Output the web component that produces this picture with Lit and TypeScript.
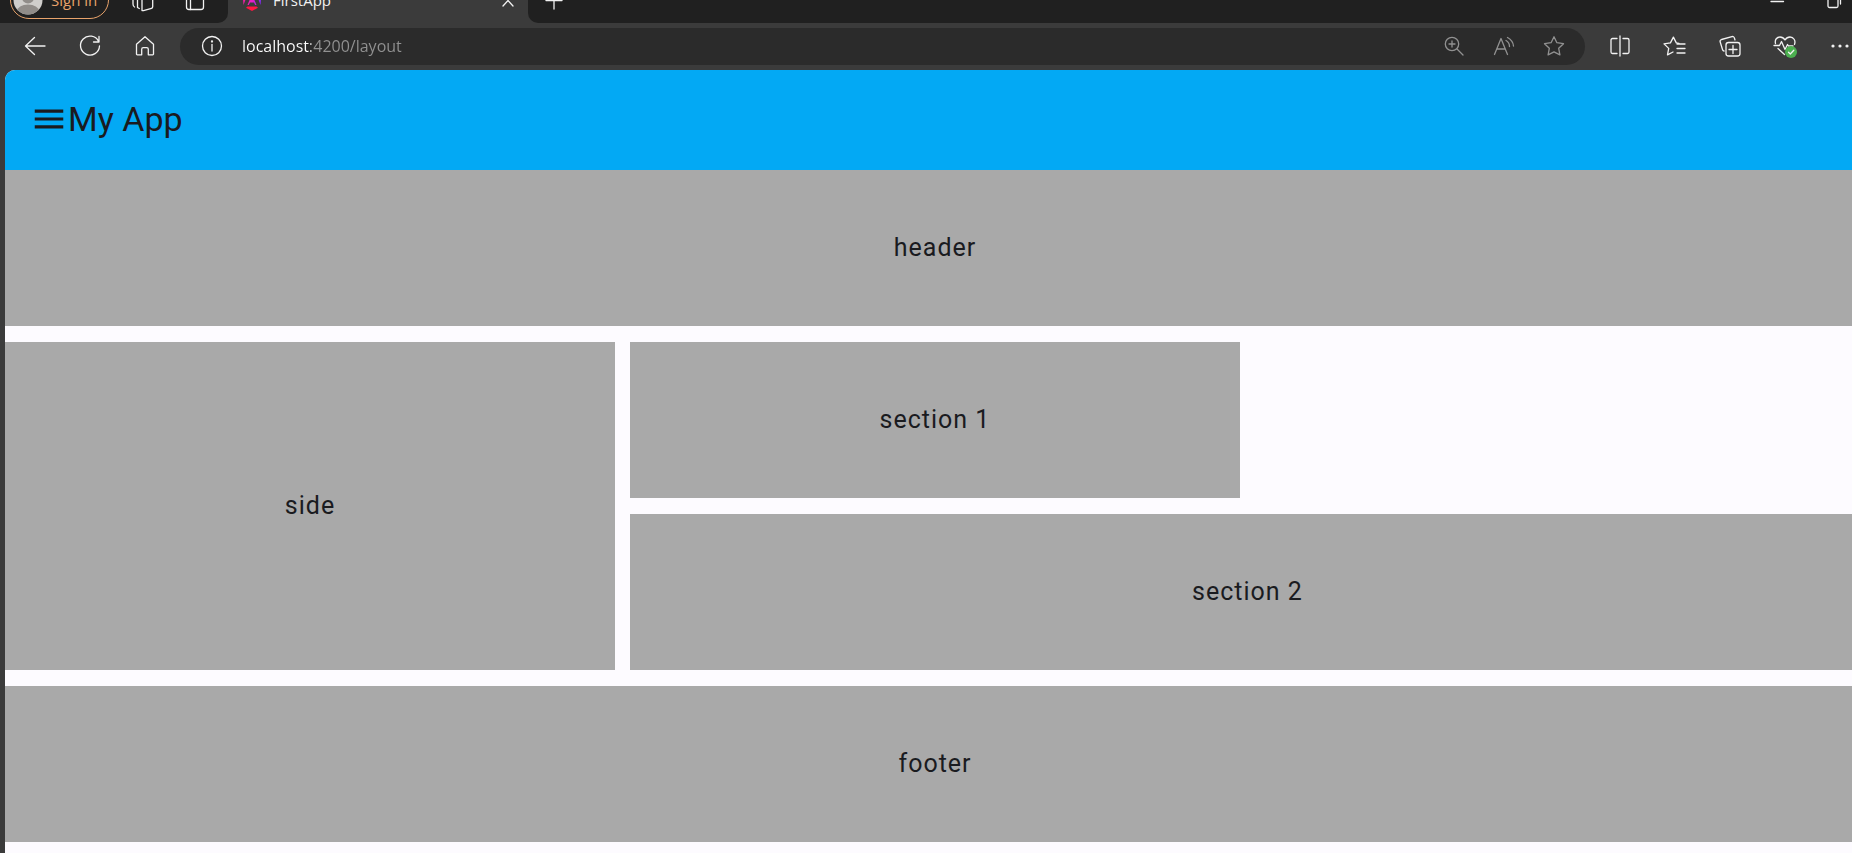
import { LitElement, html, svg, css, TemplateResult } from "lit";
import { customElement, property } from "lit/decorators.js";

const glyphs: Record<string, TemplateResult> = {
  back: svg`<path d="M22 12H2.500M11.500 3.500 2.500 12l9 8.500"/>`,
  reload: svg`<path d="M20.600 7.500A9.500 9.500 0 1 0 21.500 12M21 2.500V8h-5.500"/>`,
  home: svg`<path d="M3.500 10.200 12 2.800l8.500 7.400V20a.8.8 0 0 1-.8.8h-4.400v-5.500a1.600 1.600 0 0 0-1.600-1.600h-3.400a1.600 1.600 0 0 0-1.600 1.600v5.500H4.300a.8.8 0 0 1-.8-.8z"/>`,
  info: svg`<circle cx="12" cy="12" r="9.500"/><path d="M12 10.500V17"/><circle cx="12" cy="7.500" r=".5"/>`,
  zoom: svg`<circle cx="10" cy="10" r="6.700"/><path d="m15 15 6 6M10 7v6M7 10h6"/>`,
  read: svg`<path d="M2.500 20.500 9 4.500l6.500 16M5 15h8M14 6.500q3.500 2 3.500 6M15.500 3.500q5.500 3 6 8.500"/>`,
  star: svg`<path d="m12 2.800 2.900 5.900 6.600 1-4.800 4.600 1.200 6.600L12 17.800l-5.900 3.100 1.200-6.600-4.800-4.600 6.600-1z"/>`,
  split: svg`<path d="M12 2v20M9 4.500H4.500a1.500 1.500 0 0 0-1.500 1.500v12a1.500 1.500 0 0 0 1.500 1.500H9M15 4.500h4.500a1.500 1.500 0 0 1 1.500 1.500v12a1.500 1.500 0 0 1-1.500 1.500H15"/>`,
  favorites: svg`<path d="M16 9.300l-2.700-.4-2.900-5.800-3 5.800-6.400 1 4.700 4.500-1.200 6.500 5.500-2.900M14 10h8M14 14.500h8M14 19h8"/>`,
  collections: svg`<rect x="8" y="8.500" width="14" height="13.500" rx="2.500"/><path d="M15 11.500v8M11 15.500h8M17 6l-.6-2a2 2 0 0 0-2.500-1.400L3.500 5.500A2 2 0 0 0 2.200 8l2.300 7.500a2 2 0 0 0 1.500 1.500"/>`,
  health: svg`<path d="M2.500 9.500C1.500 5.500 4 3 7 3c2.300 0 4 1.500 5 3 1-1.500 2.700-3 5-3 3.500 0 6 3.500 4.500 7.500M1 11.500h5.500l2-4 3.500 8 2.500-5 1 1.500H20M5 14.500l6.500 6"/><circle cx="18" cy="18" r="6" class="ok"/><path d="m15.500 18.300 1.800 1.700 3.500-3.800"/>`,
  more: svg`<g class="solid"><circle cx="5" cy="12" r="1.600"/><circle cx="12" cy="12" r="1.600"/><circle cx="19" cy="12" r="1.600"/></g>`,
  workspaces: svg`<path d="M11 3v19.500l1.500.2 8-2.400a1.500 1.500 0 0 0 1.200-1.500V3zM6.500 3v16.500l1.800 1M2 4v12q0 2.500 1.500 3"/>`,
  tabs: svg`<rect x="3.500" y="3.500" width="17" height="18" rx="2.500"/><path d="M7.500 8.500v13M3.500 8.500h17"/>`,
  close: svg`<path d="m7 7 10 11M17 7 7 18"/>`,
  plus: svg`<path d="M12 4v17M4 12.500h16"/>`,
  minimise: svg`<path d="M6 13.500h12.500"/>`,
  restore: svg`<rect x="6" y="9" width="10" height="10.500" rx="1.500"/><path d="M8.500 6.500h7.500q2.500 0 2.500 2.500v7"/>`,
};

@customElement("line-icon")
class LineIcon extends LitElement {
  @property() name = "";

  static styles = css`
    :host { display: block; width: 24px; height: 24px; }
    .glyph {
      display: block; width: 100%; height: 100%; fill: none; stroke: currentColor;
      stroke-width: 1.3; stroke-linecap: round; stroke-linejoin: round;
    }
    .solid { fill: currentColor; stroke: none; }
    .ok { fill: #4caf50; stroke: none; }
  `;

  render() {
    return html`<svg class="glyph" viewBox="0 0 24 24" aria-hidden="true">${glyphs[this.name]}</svg>`;
  }
}

@customElement("browser-chrome")
class BrowserChrome extends LitElement {
  static styles = css`
    :host {
      display: block; background: #3b3b3b; color: #f2f2f2;
      font-family: "Open Sans", "Noto Sans", sans-serif; font-size: 16px;
    }
    button {
      display: flex; align-items: center; justify-content: center; flex: none;
      margin: 0; padding: 0; border: 0; background: none; color: inherit; font: inherit;
    }
    .strip { display: flex; align-items: flex-end; height: 23px; margin-right: -10px; overflow: hidden; }
    .group { display: flex; align-items: center; height: 46px; box-sizing: border-box; background: #202020; }
    .lead { width: 228px; padding-left: 10px; gap: 15px; border-bottom-right-radius: 10px; }
    .trail { flex: 1; padding-left: 14px; border-bottom-left-radius: 10px; }
    .profile {
      box-sizing: border-box; width: 99px; height: 38px; gap: 8px; justify-content: flex-start;
      padding-left: 2px; border: 1px solid #e8a36b; border-radius: 19px; color: #e8a36b; font-size: 15px;
    }
    .avatar { display: block; width: 30px; height: 30px; flex: none; }
    .small { width: 37px; height: 34px; }
    .tab {
      display: flex; align-items: center; box-sizing: border-box; width: 300px; height: 46px;
      padding: 0 8px 0 13px; gap: 10px; font-size: 15px;
    }
    .favicon { width: 22px; height: 22px; flex: none; }
    .label { flex: 1; }
    .window { display: flex; margin-left: auto; }
    .control { width: 57px; height: 46px; }
    .bar {
      display: flex; align-items: center; box-sizing: border-box; height: 47px;
      margin-right: -15px; padding: 0 0 1px 7px;
    }
    .tool { width: 55px; height: 46px; }
    .address {
      display: flex; align-items: center; flex: 1; height: 37px; margin: 0 7px 0 8px;
      padding: 0 6px 0 7px; border-radius: 19px; background: #2b2b2b;
    }
    .pill { width: 50px; height: 37px; }
    .dim { color: #919191; }
    .url {
      flex: 1; min-width: 0; height: 30px; margin: 0 0 0 5px; padding: 0; border: 0; outline: 0;
      font: 16px/24px "Open Sans", "Noto Sans", sans-serif;
      background: linear-gradient(to right, #fff 69px, #919191 69px);
      -webkit-background-clip: text; background-clip: text; color: transparent;
    }
  `;

  private tool(name: string, label: string, kind = "tool") {
    return html`<button class=${kind} aria-label=${label}><line-icon name=${name}></line-icon></button>`;
  }

  render() {
    return html`
      <div class="strip">
        <div class="group lead">
          <button class="profile">
            <svg class="avatar" viewBox="0 0 30 30" aria-hidden="true">
              <clipPath id="disc"><circle cx="15" cy="15" r="14.500" /></clipPath>
              <g clip-path="url(#disc)">
                <rect width="30" height="30" fill="#d0cecb" />
                <circle cx="15" cy="12.500" r="6" fill="#918d89" />
                <ellipse cx="15" cy="26" rx="11" ry="6.500" fill="#918d89" />
              </g>
            </svg>
            <span>Sign in</span>
          </button>
          ${this.tool("workspaces", "Workspaces", "small")}
          ${this.tool("tabs", "Tab actions menu", "small")}
        </div>
        <div class="tab">
          <svg class="favicon" viewBox="0 0 22 22" aria-hidden="true">
            <linearGradient id="brand" x1="0" x2="1">
              <stop offset="0" stop-color="#f0209c" />
              <stop offset=".5" stop-color="#e91ec8" />
              <stop offset="1" stop-color="#7a2cff" />
            </linearGradient>
            <path d="M13.500 0 20.500 3.500 19.500 16zM8.500 0 1.500 3.500 2.500 16zM11 5l4.500 11-1.300 0-1.200-2.500H9L7.800 16H6.500z" fill="url(#brand)" />
            <path d="M6.500 17.500h9l1.500 1.300-6 3.200-6-3.200z" fill="#ff1744" />
          </svg>
          <span class="label">FirstApp</span>
          ${this.tool("close", "Close tab", "")}
        </div>
        <div class="group trail">
          ${this.tool("plus", "New tab", "")}
          <div class="window">
            ${this.tool("minimise", "Minimise", "control")}
            ${this.tool("restore", "Restore", "control")}
          </div>
        </div>
      </div>
      <div class="bar">
        ${this.tool("back", "Back")} ${this.tool("reload", "Refresh")} ${this.tool("home", "Home")}
        <div class="address">
          ${this.tool("info", "Site information", "pill")}
          <input class="url" aria-label="Address" .value=${"localhost:4200/layout"} spellcheck="false" />
          ${this.tool("zoom", "Zoom", "pill dim")}
          ${this.tool("read", "Read aloud", "pill dim")}
          ${this.tool("star", "Add to favourites", "pill dim")}
        </div>
        ${this.tool("split", "Split screen")} ${this.tool("favorites", "Favourites")}
        ${this.tool("collections", "Collections")} ${this.tool("health", "Browser essentials")}
        ${this.tool("more", "Settings and more")}
      </div>
    `;
  }
}

@customElement("app-root")
class AppRoot extends LitElement {
  static styles = css`
    :host {
      display: flex; flex-direction: column; height: 100vh; overflow: hidden;
      background: #3b3b3b; color: #1a1b1f; font-family: Roboto, sans-serif;
    }
    /* The page is a little wider than the visible window. */
    .page {
      flex: 1; margin: 0 -13px 0 5px; overflow: hidden;
      border-top-left-radius: 10px; background: #fdfbff;
    }
    .toolbar {
      display: flex; align-items: center; height: 100px; padding: 0 25px 2px;
      box-sizing: border-box; background: #03a9f4;
    }
    .menu { padding: 0; border: 0; background: none; color: inherit; }
    .bars { display: block; width: 38px; height: 38px; fill: currentColor; }
    .title { margin: 0; font-size: 34px; line-height: 44px; font-weight: 400; }
    .layout {
      display: grid; gap: 16px 15px; grid-template-columns: repeat(3, 1fr); grid-auto-rows: 156px;
      grid-template-areas: "head head head" "side one ." "side two two" "foot foot foot";
    }
    .cell {
      display: flex; align-items: center; justify-content: center;
      background: #a9a9a9; font-size: 25px; line-height: 38px; letter-spacing: 1px;
    }
    .head { grid-area: head; }
    .side { grid-area: side; }
    .one { grid-area: one; }
    .two { grid-area: two; }
    .foot { grid-area: foot; }
  `;

  render() {
    return html`
      <browser-chrome></browser-chrome>
      <div class="page">
        <nav class="toolbar">
          <button class="menu" aria-label="Menu">
            <svg class="bars" viewBox="0 0 24 24" aria-hidden="true"><path d="M3 18h18v-2H3v2zm0-5h18v-2H3v2zm0-7v2h18V6H3z" /></svg>
          </button>
          <h1 class="title">My App</h1>
        </nav>
        <main class="layout">
          <header class="cell head">header</header>
          <aside class="cell side">side</aside>
          <section class="cell one">section 1</section>
          <section class="cell two">section 2</section>
          <footer class="cell foot">footer</footer>
        </main>
      </div>
    `;
  }
}
